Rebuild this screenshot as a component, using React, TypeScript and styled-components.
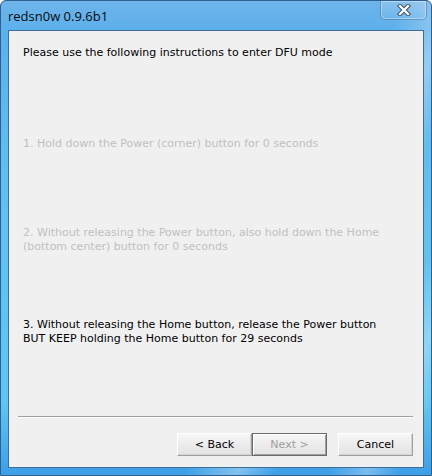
import styled, { createGlobalStyle } from "styled-components";

const GlobalStyle = createGlobalStyle`
  html, body {
    margin: 0;
    padding: 0;
    background: #ffffff;
  }
  #root {
    width: 432px;
    height: 476px;
  }
`;

const steps = [
  {
    lines: ["1. Hold down the Power (corner) button for 0 seconds"],
    active: false,
    top: 77,
  },
  {
    lines: [
      "2. Without releasing the Power button, also hold down the Home",
      "(bottom center) button for 0 seconds",
    ],
    active: false,
    top: 75,
  },
  {
    lines: [
      "3. Without releasing the Home button, release the Power button",
      "BUT KEEP holding the Home button for 29 seconds",
    ],
    active: true,
    top: 64,
  },
];

const CloseGlyph = () => (
  <svg width="14" height="12" viewBox="0 0 14 12">
    <path
      d="M3 2 L11 10 M11 2 L3 10"
      stroke="#4a5868"
      strokeWidth="4.4"
      strokeLinecap="square"
    />
    <path
      d="M3 2 L11 10 M11 2 L3 10"
      stroke="#ffffff"
      strokeWidth="2.2"
      strokeLinecap="square"
    />
  </svg>
);

export default function App() {
  return (
    <>
      <GlobalStyle />
      <Window>
        <TitleBar>
          <Caption>redsn0w 0.9.6b1</Caption>
          <CloseButton>
            <CloseGlyph />
          </CloseButton>
        </TitleBar>
        <Client>
          <Content>
            <Heading>Please use the following instructions to enter DFU mode</Heading>
            {steps.map((step, i) => (
              <Step key={i} $active={step.active} $top={step.top}>
                {step.lines.map((line) => (
                  <div key={line}>{line}</div>
                ))}
              </Step>
            ))}
          </Content>
          <Footer>
            <Separator />
            <ButtonRow>
              <Button>&lt; Back</Button>
              <Button $default $disabled>
                Next &gt;
              </Button>
              <Button $gap>Cancel</Button>
            </ButtonRow>
          </Footer>
        </Client>
      </Window>
    </>
  );
}

const Window = styled.div`
  width: 432px;
  height: 476px;
  box-sizing: border-box;
  display: flex;
  flex-direction: column;
  border: 1px solid #2e5f8f;
  border-radius: 6px 6px 0 0;
  background:
    linear-gradient(
      115deg,
      rgba(255, 255, 255, 0) 0%,
      rgba(255, 255, 255, 0) 62%,
      rgba(255, 255, 255, 0.35) 70%,
      rgba(255, 255, 255, 0) 76%,
      rgba(255, 255, 255, 0) 84%,
      rgba(255, 255, 255, 0.3) 90%,
      rgba(255, 255, 255, 0) 95%
    ),
    linear-gradient(
      180deg,
      #6fb4ea 0%,
      #5cb0ec 6%,
      #62c0f0 40%,
      #5ec6f1 85%,
      #3e9ee6 100%
    );
  overflow: hidden;
`;

const TitleBar = styled.div`
  height: 29px;
  display: flex;
  align-items: flex-start;
  padding-left: 7px;
  padding-right: 4px;
`;

const Caption = styled.div`
  margin-top: 6px;
  font-family: "Open Sans", "Noto Sans", sans-serif;
  font-size: 13px;
  color: #0b0b0b;
`;

const CloseButton = styled.div`
  margin-left: auto;
  width: 47px;
  height: 19px;
  box-sizing: border-box;
  display: flex;
  align-items: center;
  justify-content: center;
  border: 1px solid rgba(50, 90, 130, 0.45);
  border-top: none;
  border-radius: 0 0 5px 5px;
  box-shadow: inset 0 0 0 1px rgba(255, 255, 255, 0.35);
  background: linear-gradient(
    180deg,
    rgba(255, 255, 255, 0.2),
    rgba(255, 255, 255, 0.05)
  );
`;

const Client = styled.div`
  flex: 1;
  margin: 0 7px 7px 7px;
  border: 1px solid #3d6d99;
  background: #f0f0f0;
  display: flex;
  flex-direction: column;
  font-family: "DejaVu Sans", Verdana, sans-serif;
  font-size: 11px;
  line-height: 14px;
`;

const Content = styled.div`
  padding: 15px 14px 0 14px;
  display: flex;
  flex-direction: column;
`;

const Heading = styled.div`
  color: #000000;
`;

const Step = styled.div<{ $active: boolean; $top: number }>`
  margin-top: ${(p) => p.$top}px;
  color: ${(p) => (p.$active ? "#000000" : "#c0c0c0")};
`;

const Footer = styled.div`
  margin-top: auto;
  padding: 0 10px 11px 9px;
  display: flex;
  flex-direction: column;
`;

const Separator = styled.div`
  border-top: 1px solid #a0a0a0;
  border-bottom: 1px solid #ffffff;
`;

const ButtonRow = styled.div`
  margin-top: 15px;
  display: flex;
  justify-content: flex-end;
`;

const Button = styled.div<{
  $default?: boolean;
  $disabled?: boolean;
  $gap?: boolean;
}>`
  width: 75px;
  height: 23px;
  box-sizing: border-box;
  margin-left: ${(p) => (p.$gap ? "11px" : "0")};
  display: flex;
  align-items: center;
  justify-content: center;
  font-size: 11px;
  color: ${(p) => (p.$disabled ? "#a0a0a0" : "#000000")};
  background: linear-gradient(180deg, #f6f6f6 0%, #ececec 50%, #e3e3e3 100%);
  border: 1px solid;
  border-color: ${(p) =>
    p.$default
      ? "#6a6a6a"
      : "#ffffff #a0a0a0 #a0a0a0 #ffffff"};
  box-shadow: ${(p) =>
    p.$default
      ? "inset 1px 1px 0 #ffffff, inset -1px -1px 0 #a0a0a0"
      : "inset -1px -1px 0 #d4d4d4"};
`;
